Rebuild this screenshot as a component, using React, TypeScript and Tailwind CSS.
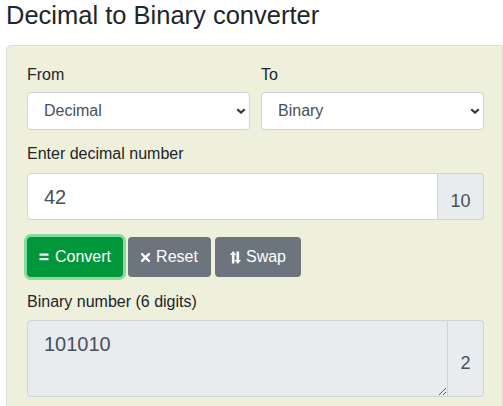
import { useState } from 'react';

function SwapIcon() {
  return (
    <svg width="11" height="13" viewBox="0 0 11 13" fill="currentColor" className="shrink-0">
      <path d="M3.2 0 L6.4 4 H4.5 V12.6 H1.9 V4 H0 Z" />
      <path d="M7.8 13 L4.6 9 H6.5 V0.4 H9.1 V9 H11 Z" />
    </svg>
  );
}

function XIcon() {
  return (
    <svg width="9" height="9" viewBox="0 0 9 9" className="shrink-0">
      <path d="M1 1 L8 8 M8 1 L1 8" stroke="currentColor" strokeWidth="2.4" strokeLinecap="square" />
    </svg>
  );
}

function EqIcon() {
  return (
    <svg width="10" height="8" viewBox="0 0 10 8" fill="currentColor" className="shrink-0">
      <rect x="0.5" y="0.5" width="9" height="2.2" />
      <rect x="0.5" y="5" width="9" height="2.2" />
    </svg>
  );
}

function Chevron() {
  return (
    <svg width="10" height="6" viewBox="0 0 10 6" className="pointer-events-none absolute right-[4px] top-[16px]">
      <path d="M1.2 1.2 L5 4.6 L8.8 1.2" fill="none" stroke="#343a40" strokeWidth="2.2" />
    </svg>
  );
}

export default function App() {
  const [from, setFrom] = useState('Decimal');
  const [to, setTo] = useState('Binary');
  const [value, setValue] = useState('42');

  return (
    <div className="w-[503px] h-[406px] overflow-hidden bg-white text-[#212529] font-['Liberation_Sans',Arial,sans-serif]">
      <h1 className="pl-[6px] text-[25.5px] leading-[30px] font-normal mb-[15px]">Decimal to Binary converter</h1>

      <div className="ml-[6px] w-[497px] border border-[#dcdfd0] rounded-tl-[5px] bg-[#eef0dc] pt-[17px] pl-[20px] pr-[17px] pb-[20px]">
        <div className="grid grid-cols-2 gap-x-[11px] w-[457px]">
          <div>
            <div className="text-[16px] leading-[24px] mb-[5px]">From</div>
            <div className="relative">
              <select
                value={from}
                onChange={e => setFrom(e.target.value)}
                className="appearance-none w-full h-[38px] bg-white border border-[#ced4da] rounded-[4px] pl-[16px] text-[16px] text-[#495057] outline-none"
              >
                <option>Decimal</option>
                <option>Binary</option>
                <option>Hexadecimal</option>
              </select>
              <Chevron />
            </div>
          </div>
          <div>
            <div className="text-[16px] leading-[24px] mb-[5px]">To</div>
            <div className="relative">
              <select
                value={to}
                onChange={e => setTo(e.target.value)}
                className="appearance-none w-full h-[38px] bg-white border border-[#ced4da] rounded-[4px] pl-[16px] text-[16px] text-[#495057] outline-none"
              >
                <option>Binary</option>
                <option>Decimal</option>
                <option>Hexadecimal</option>
              </select>
              <Chevron />
            </div>
          </div>
        </div>

        <div className="text-[16px] leading-[24px] mt-[12px] mb-[7px]">Enter decimal number</div>
        <div className="flex w-[457px] h-[47px]">
          <input
            value={value}
            onChange={e => setValue(e.target.value)}
            className="flex-1 min-w-0 bg-white border border-[#ced4da] rounded-l-[4px] pl-[16px] text-[20px] text-[#495057] outline-none"
          />
          <div className="w-[46px] flex items-center justify-center pt-[9px] bg-[#e9ecef] border border-l-0 border-[#ced4da] rounded-r-[4px] text-[18px] leading-[18px] text-[#495057]">
            10
          </div>
        </div>

        <div className="flex gap-[4px] mt-[17px] h-[40px]">
          <button className="w-[96px] h-[40px] flex items-center justify-center gap-[6px] rounded-[4px] bg-[#00973a] text-white text-[16px] ring-[3px] ring-[#84dd9f]">
            <EqIcon />
            <span>Convert</span>
          </button>
          <button className="ml-[1px] w-[83px] h-[40px] flex items-center justify-center gap-[6px] rounded-[4px] bg-[#6c757d] text-white text-[16px]">
            <XIcon />
            <span>Reset</span>
          </button>
          <button className="w-[86px] h-[40px] flex items-center justify-center gap-[5px] rounded-[4px] bg-[#6c757d] text-white text-[16px]">
            <SwapIcon />
            <span>Swap</span>
          </button>
        </div>

        <div className="text-[16px] leading-[24px] mt-[13px] mb-[6px]">Binary number (6 digits)</div>
        <div className="flex w-[457px] h-[77px]">
          <textarea
            readOnly
            value="101010"
            className="flex-1 min-w-0 bg-[#e9ecef] border border-[#ced4da] rounded-l-[4px] pl-[16px] pt-[8px] text-[20px] leading-[30px] text-[#495057] outline-none"
          />
          <div className="w-[36px] flex items-center justify-center pt-[9px] bg-[#e9ecef] border border-l-0 border-[#ced4da] rounded-r-[4px] text-[18px] leading-[18px] text-[#495057]">
            2
          </div>
        </div>
      </div>
    </div>
  );
}
